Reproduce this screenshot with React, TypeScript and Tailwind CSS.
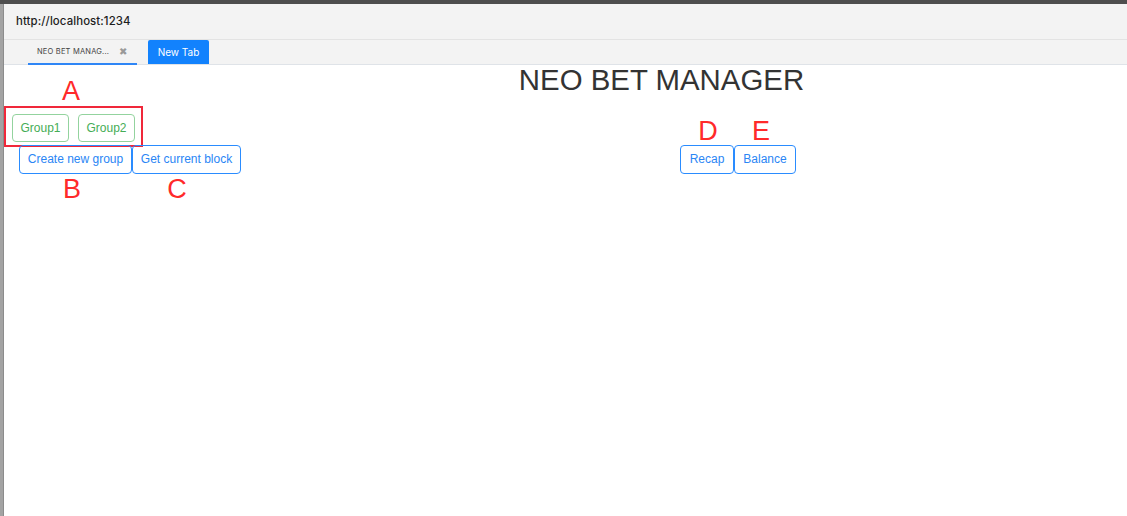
import React from "react";

const sans = { fontFamily: '"Liberation Sans", Arial, sans-serif' };

export default function App() {
  return (
    <div className="w-[1127px] h-[516px] bg-white flex flex-col overflow-hidden" style={sans}>
      <div className="h-[4px] bg-[#4e4e4e] shrink-0" />
      <div className="flex flex-1">
        <div className="w-[4px] bg-[#a3a3a3] border-r border-[#8c8c8c] shrink-0" />
        <div className="flex-1 flex flex-col">
          {/* address bar */}
          <div className="h-[36px] bg-[#f3f3f3] border-b border-[#e3e3e3] flex items-center pl-[12px] shrink-0">
            <span
              className="text-[11.4px] font-medium text-[#1e1e1e] tracking-[0.1px]"
              style={{ fontFamily: 'Inter, "Noto Sans", sans-serif' }}
            >
              http://localhost:1234
            </span>
          </div>
          {/* tab bar */}
          <div className="h-[25px] bg-[#f3f3f3] border-b border-[#dfe3e8] flex items-stretch pl-[24px] shrink-0">
            <div className="w-[109px] flex items-center pl-[9px] border-b-2 border-[#2f86f6] -mb-px">
              <span
                className="text-[7.5px] text-[#444] tracking-[0.2px]"
                style={{ fontFamily: 'Inter, "Noto Sans", sans-serif' }}
              >
                NEO BET MANAG...
              </span>
              <span className="ml-[10px] text-[10px] text-[#999] leading-none">✖</span>
            </div>
            <div
              className="ml-[11px] w-[61px] bg-[#1282fd] rounded-t-[2px] flex items-center justify-center text-white text-[10px]"
              style={{ fontFamily: 'Inter, "Noto Sans", sans-serif' }}
            >
              New Tab
            </div>
          </div>
          {/* content */}
          <div className="flex-1 relative">
            <div className="pl-[192px] flex justify-center">
              <h1 className="text-[29.4px] leading-[29px] text-[#333]">NEO BET MANAGER</h1>
            </div>
            <div className="mt-[12px] -mb-[2px] w-[139px] border-2 border-[#f0283a] pt-[6px] pb-[3px] px-[6px] flex gap-[9px]">
              <button className="w-[58px] h-[28px] pb-px border border-[#93d39e] rounded-[4px] text-[12px] text-[#45ad56]">
                Group1
              </button>
              <button className="w-[58px] h-[28px] pb-px border border-[#93d39e] rounded-[4px] text-[12px] text-[#45ad56]">
                Group2
              </button>
            </div>
            <div className="flex pl-[15px]">
              <button className="w-[113px] h-[29px] pb-[2px] border border-[#2a8cff] rounded-[4px] text-[12px] text-[#2a86f5]">
                Create new group
              </button>
              <button className="w-[109px] h-[29px] pb-[2px] border border-[#2a8cff] rounded-[4px] text-[12px] text-[#2a86f5]">
                Get current block
              </button>
              <button className="ml-[439px] w-[54px] h-[29px] pb-[2px] border border-[#2a8cff] rounded-[4px] text-[12px] text-[#2a86f5]">
                Recap
              </button>
              <button className="w-[62px] h-[29px] pb-[2px] border border-[#2a8cff] rounded-[4px] text-[12px] text-[#2a86f5]">
                Balance
              </button>
            </div>
            {/* annotation overlays */}
            <span className="absolute left-[52px] top-[13px] w-[30px] text-center text-[27px] leading-none text-[#ff2a2a]">A</span>
            <span className="absolute left-[53px] top-[111px] w-[30px] text-center text-[27px] leading-none text-[#ff2a2a]">B</span>
            <span className="absolute left-[158px] top-[111px] w-[30px] text-center text-[27px] leading-none text-[#ff2a2a]">C</span>
            <span className="absolute left-[689px] top-[53px] w-[30px] text-center text-[27px] leading-none text-[#ff2a2a]">D</span>
            <span className="absolute left-[742px] top-[53px] w-[30px] text-center text-[27px] leading-none text-[#ff2a2a]">E</span>
          </div>
        </div>
      </div>
    </div>
  );
}
